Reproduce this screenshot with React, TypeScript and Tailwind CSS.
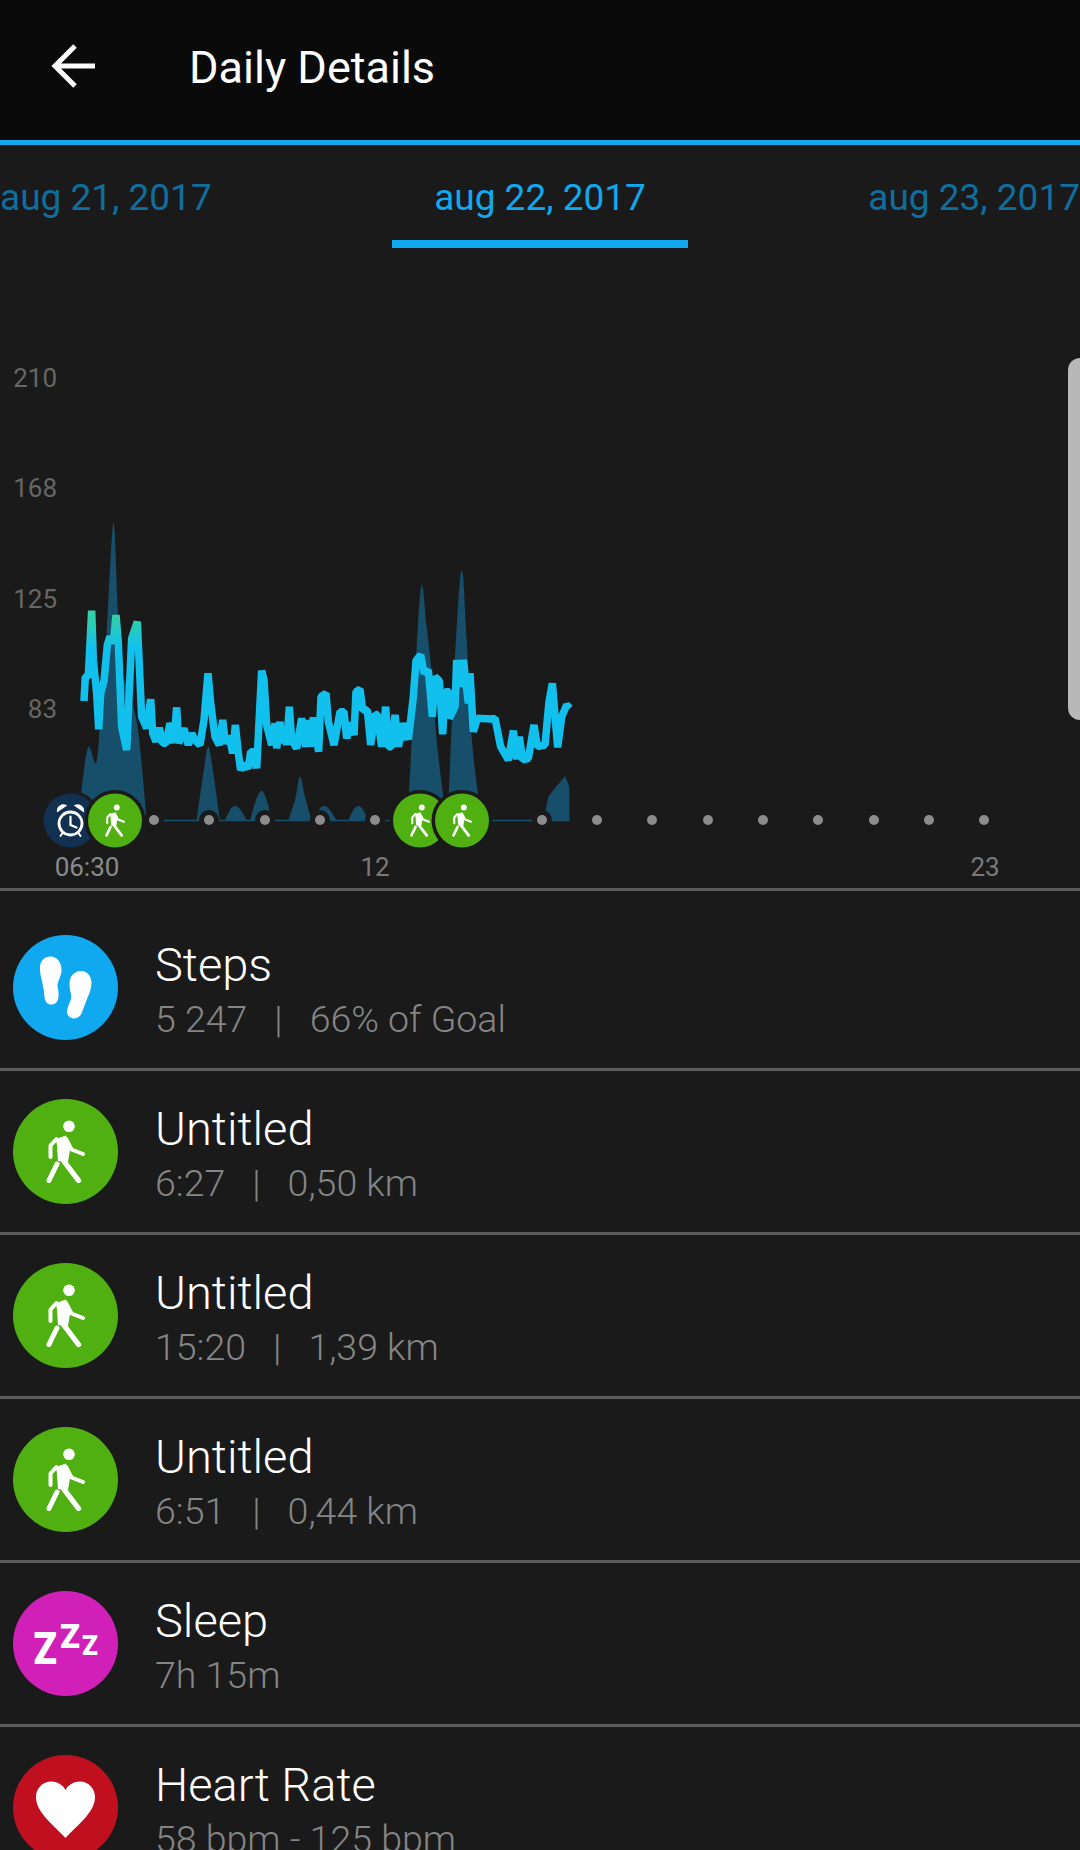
const traced = (ox: number, oy: number, pts: number[]) => pts.map((v, i) => (i % 2 === 0 ? ox + v / 3 : oy + v / 3));
const left = (pts: number[]) => traced(0, 500, pts);
const right = (pts: number[]) => traced(300, 540, pts);

// traced heart rate line
const heartLine = [
  ...traced(80, 600, [
    12, 303, 16, 230, 25, 228, 35, 32, 40, 180, 50, 280, 56, 388, 62, 280, 72, 243, 82, 135, 90, 110, 100, 130, 108, 45,
    115, 130, 125, 380, 140, 450, 155, 115, 172, 65, 180, 240, 185, 350, 200, 385, 212, 298, 218, 400, 228, 425, 238,
    383, 248, 430, 258, 430, 270, 370, 272, 430, 278, 368, 282, 425, 290, 322, 296, 430, 312, 385, 325, 435, 335, 400,
    345, 420, 360, 435, 372, 360, 384, 220, 392, 310, 405, 410, 418, 435, 428, 360, 436, 430, 448, 408, 458, 460, 466,
    375, 475, 460, 482, 510, 492, 490,
  ]),
  ...traced(240, 640, [
    5, 380, 15, 375, 25, 385, 32, 335, 42, 335, 50, 385, 65, 92, 72, 120, 80, 255, 95, 315, 105, 250, 110, 325, 120, 245,
    125, 310, 132, 265, 140, 315, 148, 200, 155, 300, 170, 325, 185, 235, 197, 320, 207, 240, 215, 320, 220, 232, 236,
    335, 243, 170, 258, 160, 265, 245, 282, 315, 300, 215, 312, 215, 320, 295, 332, 248, 342, 285, 348, 155, 360, 148,
    368, 210, 382, 210, 392, 315, 405, 222, 412, 225, 425, 320, 437, 200, 445, 320, 455, 320, 465, 225, 475, 320, 490,
    250, 500, 300,
  ]),
  ...traced(400, 640, [
    5, 250, 25, 298, 32, 240, 40, 170, 48, 62, 62, 45, 72, 100, 85, 90, 97, 230, 105, 110, 118, 122, 128, 283, 135, 155,
    148, 155, 148, 235, 165, 200, 170, 60, 180, 140, 190, 60, 205, 190, 210, 100, 220, 275, 232, 235, 275, 237, 285, 235,
    302, 320, 325, 360, 340, 272, 350, 358, 358, 290, 368, 360, 385, 355, 402, 255, 412, 320, 435, 315, 447, 185, 457,
    130, 473, 322, 485, 230, 500, 195, 510, 205,
  ]),
];

// traced activity area, split into humps so each one can be smoothed on its own
const humps = [
  left([243, 962, 245, 870, 265, 740, 290, 785, 305, 580, 320, 400, 340, 70, 352, 300, 360, 500, 375, 545, 405, 640, 420, 740, 440, 962]),
  left([590, 962, 610, 820, 625, 740, 640, 820, 660, 962]),
  left([675, 962, 690, 930, 705, 918, 722, 930, 740, 962]),
  left([750, 962, 768, 900, 785, 872, 800, 900, 815, 962]),
  [...left([865, 962, 885, 900]), ...right([0, 710, 15, 770, 35, 842])],
  right([40, 842, 60, 805, 75, 798, 90, 810, 110, 842]),
  right([145, 842, 160, 810, 175, 798, 190, 810, 205, 842]),
  right([322, 842, 330, 700, 350, 320, 365, 135, 380, 260, 395, 400, 410, 600, 430, 770, 440, 842]),
  right([440, 842, 447, 740, 465, 350, 485, 90, 500, 300, 515, 590, 535, 770, 545, 842]),
];

// catmull-rom through the traced points
const smooth = (p: number[]) => {
  let d = `M${p[0]} ${p[1]}`;
  for (let i = 0; i < p.length - 2; i += 2) {
    const x0 = p[i - 2] ?? p[i];
    const y0 = p[i - 1] ?? p[i + 1];
    const x3 = p[i + 4] ?? p[i + 2];
    const y3 = p[i + 5] ?? p[i + 3];
    const c1x = p[i] + (p[i + 2] - x0) / 6;
    const c1y = p[i + 1] + (p[i + 3] - y0) / 6;
    const c2x = p[i + 2] - (x3 - p[i]) / 6;
    const c2y = p[i + 3] - (y3 - p[i + 1]) / 6;
    d += ` C${c1x} ${c1y} ${c2x} ${c2y} ${p[i + 2]} ${p[i + 3]}`;
  }
  return d + ' Z';
};

const lastHump = right([730, 842, 745, 770, 765, 745, 795, 708, 808, 740, 808, 842]);

const dots = [154, 209, 265, 320, 375, 542, 597, 652, 708, 763, 818, 874, 929, 984];
const yLabels = [
  { text: '210', y: 387 },
  { text: '168', y: 497 },
  { text: '125', y: 608 },
  { text: '83', y: 718 },
];
const xLabels = [
  { text: '06:30', x: 87, fill: '#8a8a8a' },
  { text: '12', x: 375, fill: '#7a7a7a' },
  { text: '23', x: 985, fill: '#7a7a7a' },
];

function WalkFigure() {
  return (
    <>
      <circle cx="56" cy="27.3" r="5.8" fill="#fff" />
      <path d="M43 40 L53 36.5 L57 51 L55 63 L45 62 L44 47 Z" fill="#fff" />
      <g fill="none" stroke="#fff" strokeLinecap="round" strokeLinejoin="round">
        <path d="M43.5 40 L37.5 46.5 L37.5 58" strokeWidth="4" />
        <path d="M53 40 L58.5 50.5 L70 55" strokeWidth="4" />
        <path d="M50 61 L65.5 81.5" strokeWidth="5.3" />
        <path d="M44 65 L36 81.5" strokeWidth="5" />
      </g>
    </>
  );
}

function WalkMarker({ x }: { x: number }) {
  return (
    <g>
      <circle cx={x} cy="820.5" r="30.5" fill="#1a1a1a" />
      <circle cx={x} cy="820.5" r="27" fill="#50b012" />
      <g transform={`translate(${x - 27} 793.5) scale(0.514)`}>
        <WalkFigure />
      </g>
    </g>
  );
}

function Chart() {
  return (
    <div className="relative h-[643px] border-b-[3px] border-[#5c5c5c]">
      <svg viewBox="0 248 1080 640" className="absolute inset-0 h-[640px] w-[1080px]">
        <defs>
          <linearGradient id="hr" gradientUnits="userSpaceOnUse" x1="0" y1="618" x2="0" y2="648">
            <stop offset="0" stopColor="#30d0a8" />
            <stop offset="1" stopColor="#12c0ee" />
          </linearGradient>
        </defs>
        {yLabels.map((l) => (
          <text key={l.text} x="57" y={l.y} textAnchor="end" fontSize="26" fill="#666666" fontFamily="Roboto, sans-serif">
            {l.text}
          </text>
        ))}
        <line x1="150" y1="820.5" x2="570" y2="820.5" stroke="#174e69" strokeWidth="1.5" />
        {humps.map((h, i) => (
          <path key={i} d={smooth(h)} fill="#174e69" />
        ))}
        <polygon points={lastHump.join(' ')} fill="#174e69" />
        <polyline points={heartLine.join(' ')} fill="none" stroke="url(#hr)" strokeWidth="7.5" strokeLinejoin="bevel" />
        {dots.map((x) => (
          <g key={x}>
            <circle cx={x} cy="820" r="10" fill="#1a1a1a" />
            <circle cx={x} cy="820" r="5" fill="#8c8c8c" />
          </g>
        ))}
        <circle cx="70.5" cy="820.5" r="30" fill="#1a1a1a" />
        <circle cx="70.5" cy="820.5" r="27" fill="#12304f" />
        <g fill="none" stroke="#fff" strokeLinecap="round">
          <circle cx="70.5" cy="823.5" r="11.5" strokeWidth="2.8" />
          <path d="M70.5 816.5 V825 L76.5 827.5" strokeWidth="2.2" />
          <path d="M57.5 811.5 A6 6 0 0 1 66 805.5 Z" fill="#fff" strokeWidth="1.2" />
          <path d="M83.5 811.5 A6 6 0 0 0 75 805.5 Z" fill="#fff" strokeWidth="1.2" />
          <path d="M62.5 833 L60.5 836 M78.5 833 L80.5 836" strokeWidth="2" />
        </g>
        <WalkMarker x={115} />
        <WalkMarker x={420} />
        <WalkMarker x={462} />
        {xLabels.map((l) => (
          <text key={l.text} x={l.x} y="876" textAnchor="middle" fontSize="26" fill={l.fill} fontFamily="Roboto, sans-serif">
            {l.text}
          </text>
        ))}
      </svg>
      <div className="absolute right-0 top-[110px] h-[362px] w-[12px] rounded-l-[12px] bg-[#b8b8b8]" />
    </div>
  );
}

function StepsIcon() {
  return (
    <svg viewBox="0 0 105 105" className="h-[105px] w-[105px] shrink-0">
      <circle cx="52.5" cy="52.5" r="52.5" fill="#10a8ee" />
      <path
        d="M37.5 21.5 C44 21.5 48.5 27 48.5 35 C48.5 41 45 45 44.5 50 C44.5 53 46 56 45.5 62 C45 67 42 69.5 38.5 69.5 C34.5 69.5 32 67 31.5 62 C31 55 29.5 48 28 42 C27 38 27 35 27 33 C27 26 31 21.5 37.5 21.5 Z"
        fill="#fff"
      />
      <path
        d="M68 36 C74.5 36 78.5 41.5 78.5 48 C78.5 54 76 59 74 64 C72 69 71 72 69.5 76 C68 81 65 83.5 61 83.5 C57 83.5 54 80.5 54 76.5 C54 72 57 68 58 64 C59 60 56.5 56 56.5 49 C56.5 41.5 61 36 68 36 Z"
        fill="#fff"
      />
    </svg>
  );
}

function WalkIcon() {
  return (
    <svg viewBox="0 0 105 105" className="h-[105px] w-[105px] shrink-0">
      <circle cx="52.5" cy="52.5" r="52.5" fill="#50b012" />
      <WalkFigure />
    </svg>
  );
}

function SleepIcon() {
  return (
    <svg viewBox="0 0 105 105" className="h-[105px] w-[105px] shrink-0">
      <circle cx="52.5" cy="52.5" r="52.5" fill="#d020b8" />
      <g fill="#fff" fontFamily="Roboto, sans-serif" fontWeight="900">
        <text x="20.5" y="72.5" fontSize="44" textLength="23.5" lengthAdjust="spacingAndGlyphs">Z</text>
        <text x="47" y="57" fontSize="34" textLength="20" lengthAdjust="spacingAndGlyphs">Z</text>
        <text x="69" y="64" fontSize="27" textLength="16" lengthAdjust="spacingAndGlyphs">Z</text>
      </g>
    </svg>
  );
}

function HeartIcon() {
  return (
    <svg viewBox="0 0 105 105" className="h-[105px] w-[105px] shrink-0">
      <circle cx="52.5" cy="52.5" r="52.5" fill="#c01020" />
      <path
        d="M52.5 83 C42 71 23 58 23 42 C23 33 30 26.5 38 26.5 C44 26.5 49.5 29.5 52.5 35 C55.5 29.5 61 26.5 67 26.5 C75 26.5 82 33 82 42 C82 58 63 71 52.5 83 Z"
        fill="#fff"
      />
    </svg>
  );
}

const rows = [
  { icon: <WalkIcon />, title: 'Untitled', sub: ['6:27', '0,50 km'] },
  { icon: <WalkIcon />, title: 'Untitled', sub: ['15:20', '1,39 km'] },
  { icon: <WalkIcon />, title: 'Untitled', sub: ['6:51', '0,44 km'] },
  { icon: <SleepIcon />, title: 'Sleep', sub: ['7h 15m'] },
  { icon: <HeartIcon />, title: 'Heart Rate', sub: ['58 bpm - 125 bpm'] },
];

function Row({ icon, title, sub, tall }: { icon: React.ReactNode; title: string; sub: string[]; tall?: boolean }) {
  return (
    <div className={`flex shrink-0 items-center gap-[37px] border-b-[3px] border-[#5c5c5c] pl-[13px] ${tall ? 'h-[180px] pt-[16px]' : 'h-[164px]'}`}>
      {icon}
      <div className="pt-[7px]">
        <div className="text-[47px] leading-[54px] font-light text-white">{title}</div>
        <div className="mt-[2px] flex text-[37.5px] leading-[50px] font-light text-[#858585]">
          {sub.map((s, i) => (
            <span key={s} className="flex">
              {i > 0 && <span className="mx-[27px]">|</span>}
              {s}
            </span>
          ))}
        </div>
      </div>
    </div>
  );
}

export default function App() {
  return (
    <div className="h-[1850px] w-[1080px] overflow-hidden bg-[#1a1a1a] font-['Roboto',sans-serif]">
      {/* Header */}
      <div className="flex h-[145px] items-center border-b-[5px] border-[#10a8ee] bg-[#0a0a0a] pb-[6px] text-white">
        <svg viewBox="0 0 46 46" className="mb-[2px] ml-[51px] h-[46px] w-[46px]" fill="none" stroke="#fff" strokeWidth="5">
          <path d="M44 23 H5 M24 3 L4 23 L24 43" />
        </svg>
        <span className="ml-[92px] mt-[2px] text-[45px]">Daily Details</span>
      </div>

      {/* Tabs */}
      <div className="flex h-[103px] justify-between text-[37px] leading-[44px] whitespace-nowrap">
        <span className="pt-[31px] text-[#0f6e9e]">aug 21, 2017</span>
        <div className="w-[296px] border-b-[8px] border-[#10a8ee] pt-[31px] text-center text-[#10a8ee]">aug 22, 2017</div>
        <span className="pt-[31px] text-[#0f6e9e]">aug 23, 2017</span>
      </div>

      <Chart />

      <Row tall icon={<StepsIcon />} title="Steps" sub={['5 247', '66% of Goal']} />
      {rows.map((r, i) => (
        <Row key={i} icon={r.icon} title={r.title} sub={r.sub} />
      ))}
    </div>
  );
}
